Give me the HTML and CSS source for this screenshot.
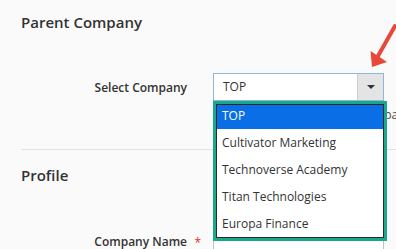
FILE: index.html
```html
<!DOCTYPE html>
<html>
<head>
<meta charset="utf-8">
<link rel="stylesheet" href="styles.css">
</head>
<body>
<div class="page">
  <section class="fieldset">
    <h2 class="legend">Parent Company</h2>
    <div class="field field-select">
      <label class="label">Select Company</label>
      <div class="control">
        <div class="select">
          <span class="select-value">TOP</span>
          <span class="select-btn"><span class="caret"></span></span>
          <ul class="dropdown">
            <li class="option active">TOP</li>
            <li class="option">Cultivator Marketing</li>
            <li class="option">Technoverse Academy</li>
            <li class="option">Titan Technologies</li>
            <li class="option">Europa Finance</li>
          </ul>
        </div>
        <div class="note">Select TOP to set a parent company</div>
      </div>
    </div>
  </section>
  <hr class="divider">
  <section class="fieldset">
    <h2 class="legend">Profile</h2>
    <div class="field field-text">
      <label class="label required">Company Name</label>
      <div class="control">
        <div class="input"></div>
      </div>
    </div>
  </section>
  <svg class="pointer" width="396" height="249" viewBox="0 0 396 249">
    <line x1="395" y1="26" x2="378" y2="56" stroke="#e8483a" stroke-width="4" stroke-linecap="round"/>
    <polygon points="372,67 370.5,51 387,62" fill="#e8483a"/>
  </svg>
</div>
</body>
</html>
```
FILE: styles.css
```css
* { box-sizing: border-box; }
html, body { margin: 0; padding: 0; }
body {
  background: #fafafa;
  font-family: "Open Sans", "Noto Sans", sans-serif;
  color: #333;
  width: 396px;
  height: 249px;
  overflow: hidden;
}
.page {
  position: relative;
  padding-top: 12px;
  height: 249px;
  overflow: hidden;
}
.fieldset {
  padding-left: 21px;
}
.legend {
  margin: 0;
  font-size: 15px;
  font-weight: 600;
  line-height: 20px;
  color: #333;
}
.field {
  display: flex;
  align-items: flex-start;
}
.field-select {
  margin-top: 41px;
}
.label {
  width: 166px;
  flex: none;
  text-align: right;
  font-size: 12px;
  font-weight: 600;
  line-height: 16px;
  color: #333;
  position: relative;
}
.field-select .label {
  padding-top: 7px;
}
.label.required::after {
  content: "*";
  position: absolute;
  right: -14px;
  top: 1px;
  color: #e02b27;
  font-size: 12px;
  font-weight: 400;
}
.control {
  margin-left: 26px;
  flex: 1;
}
.select {
  position: relative;
  width: 171px;
  height: 28px;
  border: 1px solid #8db8dc;
  background: #fff;
  display: flex;
  align-items: center;
}
.select-value {
  flex: 1;
  padding-left: 9px;
  font-size: 12px;
  line-height: 16px;
  color: #333;
}
.select-btn {
  width: 26px;
  height: 100%;
  background: #e4e4e4;
  border-left: 1px solid #cfcfcf;
  display: flex;
  align-items: center;
  justify-content: center;
}
.caret {
  width: 0;
  height: 0;
  border-left: 4px solid transparent;
  border-right: 4px solid transparent;
  border-top: 4px solid #333;
}
.dropdown {
  position: absolute;
  top: 27px;
  left: -1px;
  width: 174px;
  margin: 0;
  padding: 0;
  list-style: none;
  background: #fff;
  border: 3px solid #1aa88a;
  box-shadow: inset 0 0 0 1px #2a2a2a;
  padding: 1px;
  z-index: 2;
}
.option {
  height: 27px;
  line-height: 27px;
  padding-left: 5px;
  font-size: 12px;
  color: #333;
  white-space: nowrap;
}
.option.active {
  background: #0a6ee6;
  color: #fff;
  height: 24px;
  line-height: 22px;
}
.note {
  margin-top: 6px;
  font-size: 12px;
  line-height: 16px;
  color: #4a4a4a;
  white-space: nowrap;
}
.divider {
  margin: 26px 0 0 21px;
  border: 0;
  border-top: 1px solid #e2e2e2;
  height: 0;
}
.fieldset + .divider + .fieldset .legend {
  margin-top: 15px;
}
.field-text {
  margin-top: 49px;
}
.field-text .label {
  padding-top: 0;
}
.input {
  margin-top: 4px;
  width: 171px;
  height: 28px;
  border: 1px solid #c2c2c2;
  background: #fff;
}
.pointer {
  position: absolute;
  left: 0;
  top: 0;
  pointer-events: none;
  z-index: 3;
}
```
